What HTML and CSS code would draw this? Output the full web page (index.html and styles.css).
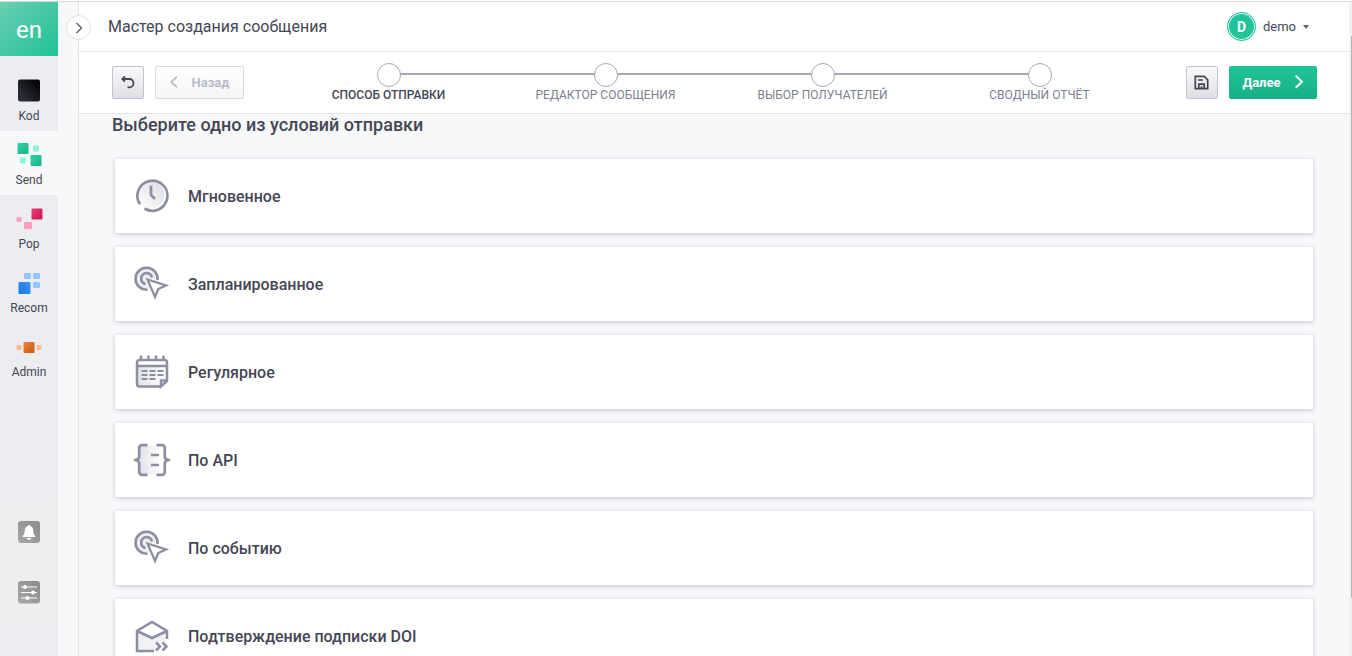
FILE: index.html
```html
<!DOCTYPE html>
<html lang="ru">

<head>
    <meta charset="UTF-8">
    <meta name="viewport" content="width=device-width, initial-scale=1.0">
    <title>Мастер создания сообщения</title>
    <link rel="stylesheet" href="styles.css">
</head>

<body>
    <aside class="sidebar">
        <a href="#" class="logo">en</a>
        <nav class="nav">
            <a href="#" class="nav-item">
                <svg width="29" height="24" viewBox="0 0 29 24">
                    <defs>
                        <linearGradient id="g-kod" x1="0" y1="1" x2="1" y2="0"><stop offset="0" stop-color="#343743"/><stop offset="1" stop-color="#000"/></linearGradient>
                        <linearGradient id="g-send" x1="0" y1="0" x2="1" y2="1"><stop offset="0" stop-color="#2fd6a8"/><stop offset="1" stop-color="#1bb288"/></linearGradient>
                        <linearGradient id="g-pop" x1="0" y1="0" x2="1" y2="1"><stop offset="0" stop-color="#ef3f7c"/><stop offset="1" stop-color="#c9134f"/></linearGradient>
                        <linearGradient id="g-recom" x1="1" y1="0" x2="0" y2="1"><stop offset="0" stop-color="#3f95f5"/><stop offset="1" stop-color="#1b76e0"/></linearGradient>
                        <linearGradient id="g-admin" x1="0" y1="0" x2="1" y2="1"><stop offset="0" stop-color="#ef8238"/><stop offset="1" stop-color="#c75a14"/></linearGradient>
                        <linearGradient id="g-gray" x1="0" y1="1" x2="1" y2="0"><stop offset="0" stop-color="#a6a6a6"/><stop offset="1" stop-color="#8c8c8c"/></linearGradient>
                    </defs>
                    <rect x="3" y="0.500" width="22" height="22" rx="2" fill="url(#g-kod)"/>
                </svg>
                <span>Kod</span>
            </a>
            <a href="#" class="nav-item active">
                <svg width="29" height="24" viewBox="0 0 29 24">
                    <rect x="2.500" y="0" width="11" height="11" rx="1" fill="url(#g-send)"/>
                    <rect x="15.500" y="12" width="11" height="11" rx="1" fill="url(#g-send)"/>
                    <rect x="18" y="2.500" width="6" height="6" rx="1" fill="#8ff5d8"/>
                    <rect x="5" y="14.500" width="6" height="6" rx="1" fill="#8ff5d8"/>
                </svg>
                <span>Send</span>
            </a>
            <a href="#" class="nav-item">
                <svg width="29" height="24" viewBox="0 0 29 24">
                    <rect x="16.500" y="1.500" width="11" height="11" rx="1" fill="url(#g-pop)"/>
                    <rect x="1.500" y="10" width="5" height="5" rx="1" fill="#fc9dbd"/>
                    <rect x="9" y="15" width="8" height="7" rx="1" fill="#fc9dbd"/>
                </svg>
                <span>Pop</span>
            </a>
            <a href="#" class="nav-item">
                <svg width="29" height="24" viewBox="0 0 29 24">
                    <rect x="3.500" y="11" width="12" height="12" rx="1" fill="url(#g-recom)"/>
                    <rect x="9" y="2" width="7" height="6" rx="1" fill="#98c7ff"/>
                    <rect x="18" y="2" width="7" height="6" rx="1" fill="#98c7ff"/>
                    <rect x="18" y="11" width="7" height="6" rx="1" fill="#98c7ff"/>
                </svg>
                <span>Recom</span>
            </a>
            <a href="#" class="nav-item">
                <svg width="29" height="24" viewBox="0 0 29 24">
                    <rect x="8.500" y="7" width="11" height="11" rx="1" fill="url(#g-admin)"/>
                    <rect x="1.500" y="10" width="5" height="5" rx="1" fill="#ffb98c"/>
                    <rect x="21.500" y="10" width="5" height="5" rx="1" fill="#ffb98c"/>
                </svg>
                <span>Admin</span>
            </a>
        </nav>
        <div class="tools">
            <button type="button" class="tool" aria-label="Уведомления">
                <svg width="23" height="23" viewBox="0 0 23 23">
                    <rect width="22" height="22" rx="3" fill="url(#g-gray)"/>
                    <path d="M11 4c.7 0 1 .5 1 1 2.300.5 3.300 2.400 3.300 4.500 0 3.500.7 4.200 2 5.200v1.300H4.700v-1.300c1.300-1 2-1.700 2-5.200 0-2.100 1-4 3.300-4.500 0-.5.3-1 1-1zM8.500 17h5c-.5 1.200-1.300 1.800-2.500 1.800s-2-.6-2.500-1.800z" fill="#fff"/>
                </svg>
            </button>
            <button type="button" class="tool" aria-label="Параметры">
                <svg width="23" height="23" viewBox="0 0 23 23">
                    <rect width="22" height="22.500" rx="3" fill="url(#g-gray)"/>
                    <path d="M3 6h16M3 11.500h16M3 17h16" stroke="#fff" stroke-width="1.200"/>
                    <g fill="#fff"><circle cx="7" cy="6" r="2"/><circle cx="15" cy="11.500" r="2"/><circle cx="9.500" cy="17" r="2"/></g>
                </svg>
            </button>
        </div>
    </aside>

    <div class="rail">
        <button type="button" class="expand" aria-label="Развернуть меню">
            <svg width="8" height="12" viewBox="0 0 8 12" fill="none" stroke="#5c5f6e" stroke-width="1.400"><path d="M1.500 1l5 5-5 5"/></svg>
        </button>
    </div>

    <main class="main">
        <header class="header">
            <h1>Мастер создания сообщения</h1>
            <button type="button" class="user">
                <span class="avatar">D</span>
                <span>demo</span>
                <span class="caret"></span>
            </button>
        </header>

        <div class="toolbar">
            <button type="button" class="btn btn-icon" aria-label="Отменить">
                <svg width="14" height="14" viewBox="0 0 14 14" fill="none" stroke="#454655" stroke-width="1.800"><path d="M4 .3L1.300 3l2.700 2.700M1.500 3h6.800a4.200 4.200 0 0 1 0 8.400H6.500"/></svg>
            </button>
            <button type="button" class="btn btn-back" disabled>
                <svg width="8" height="14" viewBox="0 0 8 14" fill="none" stroke="#b9bbcb" stroke-width="1.800"><path d="M7 .7L1.300 6 7 11.300"/></svg>
                Назад
            </button>
            <ol class="steps">
                <li class="step current">Способ отправки</li>
                <li class="step">Редактор сообщения</li>
                <li class="step">Выбор получателей</li>
                <li class="step">Сводный отчёт</li>
            </ol>
            <button type="button" class="btn btn-icon" aria-label="Сохранить">
                <svg width="16" height="16" viewBox="0 0 16 16" fill="none" stroke="#454655" stroke-width="1.700"><path d="M1.300 1.300h8.900l3.500 3.500v8.900H1.300zM4.800 13.700V9.200h5.400v4.500M4 5h5M7.500 11.200v2.500"/></svg>
            </button>
            <button type="button" class="btn btn-next">
                Далее
                <svg width="9" height="15" viewBox="0 0 9 15" fill="none" stroke="#fff" stroke-width="1.900"><path d="M.7 .8L7 6.800.7 12.800"/></svg>
            </button>
        </div>

        <section class="content">
            <h2>Выберите одно из условий отправки</h2>
            <div class="options">
                <button type="button" class="option">
                    <svg width="36" height="36" viewBox="0 0 36 36" fill="none" stroke="#8c8fa1" stroke-width="2.700">
                        <defs><linearGradient id="g-soft"><stop offset="0" stop-color="#e3e4ea"/><stop offset="1" stop-color="#fff"/></linearGradient>
                        <linearGradient id="g-clock" x1="1" y1="0" x2="0" y2="1"><stop offset="0" stop-color="#dcdde4"/><stop offset="1" stop-color="#fff"/></linearGradient></defs>
                        <circle cx="17" cy="17" r="13.500" fill="url(#g-clock)" stroke="none"/>
                        <path d="M6 26.200A15 15 0 1 1 10.500 30.500"/>
                        <path d="M17 7.500V17l4 4"/>
                    </svg>
                    <span>Мгновенное</span>
                </button>
                <button type="button" class="option">
                    <svg width="36" height="36" viewBox="0 0 36 36" fill="none" stroke="#8c8fa1" stroke-width="2.700">
                        <circle cx="12.700" cy="12.700" r="10" fill="#eeeff3" stroke="none"/>
                        <path d="M13.500 23.700A11 11 0 1 1 23.500 14M11.500 18A5.500 5.500 0 1 1 18 11.300"/>
                        <path d="M13.500 13.500l18.500 6-7.800 3.500-3.200 8z" fill="#fff" stroke-width="2.300"/>
                    </svg>
                    <span>Запланированное</span>
                </button>
                <button type="button" class="option">
                    <svg width="36" height="36" viewBox="0 0 36 36" fill="none" stroke="#8c8fa1" stroke-width="2.500">
                        <path d="M4 12h28v15l-5 5H4z" fill="url(#g-soft)" stroke="none"/>
                        <path d="M27 32.500H5.500A2.500 2.500 0 0 1 3 30V8.500A2.500 2.500 0 0 1 5.500 6h25A2.500 2.500 0 0 1 33 8.500V27l-6 5.500v-6h6M3 12h30"/>
                        <path d="M7 1.500V6M14.500 1.500V6M22 1.500V6M29.500 1.500V6"/>
                        <path d="M7.500 17h6M15.500 17h6M23.500 17h6M7.500 21h6M15.500 21h6M23.500 21h6M7.500 25h6M15.500 25h6" stroke-width="1.900"/>
                    </svg>
                    <span>Регулярное</span>
                </button>
                <button type="button" class="option">
                    <svg width="36" height="36" viewBox="0 0 36 36" fill="none" stroke="#8c8fa1" stroke-width="2.700">
                        <path d="M6 4h22v28H6z" fill="url(#g-soft)" stroke="none"/>
                        <path d="M13.500 3.200H8A2.800 2.800 0 0 0 5.200 6v8.500C5.200 17 3.500 18 0 18c3.500 0 5.200 1 5.200 3.500V30A2.800 2.800 0 0 0 8 32.800h5.500M22.500 3.200H28A2.800 2.800 0 0 1 30.800 6v8.500c0 2.500 1.700 3.500 5.200 3.500-3.500 0-5.200 1-5.200 3.500V30a2.800 2.800 0 0 1-2.800 2.800h-5.500"/>
                        <path d="M17 13h8M17 23h8"/>
                    </svg>
                    <span>По API</span>
                </button>
                <button type="button" class="option">
                    <svg width="36" height="36" viewBox="0 0 36 36" fill="none" stroke="#8c8fa1" stroke-width="2.700">
                        <circle cx="12.700" cy="12.700" r="10" fill="#eeeff3" stroke="none"/>
                        <path d="M13.500 23.700A11 11 0 1 1 23.500 14M11.500 18A5.500 5.500 0 1 1 18 11.300"/>
                        <path d="M13.500 13.500l18.500 6-7.800 3.500-3.200 8z" fill="#fff" stroke-width="2.300"/>
                    </svg>
                    <span>По событию</span>
                </button>
                <button type="button" class="option">
                    <svg width="36" height="36" viewBox="0 0 36 36" fill="none" stroke="#8c8fa1" stroke-width="2.500">
                        <path d="M4 14l14 6 14-6v12H20v7H4z" fill="#f1f2f5" stroke="none"/>
                        <path d="M20 33H3V13L18 4l15 9v8M3 13l15 7 15-7"/>
                        <path d="M22 24.500l4 4-4 4M28.500 24.500l4 4-4 4"/>
                    </svg>
                    <span>Подтверждение подписки DOI</span>
                </button>
            </div>
        </section>
    </main>

    <div class="scroll-track">
        <div class="scroll-thumb"></div>
    </div>
</body>

</html>
```
FILE: styles.css
```css
* {
    box-sizing: border-box;
    margin: 0;
    padding: 0;
}

html {
    background-color: #f7f8fa;
}

body {
    display: flex;
    height: 100vh;
    overflow: hidden;
    padding-top: 1px;
    border-top: 1px solid #fff;
    font-family: Roboto, sans-serif;
    font-size: 16px;
    color: #454655;
    background: #f7f8fa linear-gradient(#d8dadd, #d8dadd) top / 100% 1px no-repeat;
}

button {
    font-family: inherit;
    color: inherit;
    cursor: pointer;
}

svg {
    flex-shrink: 0;
}

/* Sidebar */
.sidebar {
    display: flex;
    flex-direction: column;
    flex-shrink: 0;
    width: 58px;
    padding-bottom: 34px;
    background-color: #ecedf1;
}

.logo {
    height: 54px;
    line-height: 56px;
    text-align: center;
    font-size: 24px;
    color: #fff;
    text-decoration: none;
    background: linear-gradient(135deg, #6bceb3, #1dc295);
}

.nav {
    display: flex;
    flex-direction: column;
    padding-top: 11px;
}

.nav-item {
    display: flex;
    flex-direction: column;
    align-items: center;
    gap: 6px;
    height: 64px;
    padding-top: 12px;
    font-size: 12px;
    line-height: 14px;
    color: #454655;
    text-decoration: none;
}

.nav-item.active {
    background-color: #f7f8fa;
}

.tools {
    margin-top: auto;
    background-color: #eee;
}

.tool {
    display: flex;
    align-items: center;
    justify-content: center;
    width: 100%;
    height: 60px;
    border: none;
    background: none;
}

/* Strip with the expand button */
.rail {
    position: relative;
    flex-shrink: 0;
    width: 21px;
    border-right: 1px solid #e2e4e8;
}

.expand {
    position: absolute;
    top: 13px;
    left: 8px;
    z-index: 1;
    display: flex;
    align-items: center;
    justify-content: center;
    width: 25px;
    height: 25px;
    border: 1px solid #dfe1e6;
    border-radius: 50%;
    background-color: #fff;
}

.main {
    display: flex;
    flex-direction: column;
    flex: 1;
    min-width: 0;
}

/* Header */
.header {
    display: flex;
    align-items: center;
    justify-content: space-between;
    flex-shrink: 0;
    height: 50px;
    padding: 0 40px 0 29px;
    border-bottom: 1px solid #e2e4e8;
    background-color: #fff;
}

h1 {
    font-size: 16px;
    font-weight: 400;
}

.user {
    display: flex;
    align-items: center;
    gap: 7px;
    border: none;
    background: none;
    font-size: 13px;
}

.avatar {
    width: 29px;
    height: 29px;
    border: 1px solid #1fc598;
    border-radius: 50%;
    box-shadow: inset 0 0 0 1px #fff;
    line-height: 28px;
    font-size: 14px;
    font-weight: 700;
    color: #fff;
    background-color: #1fc598;
}

.caret {
    border: 4px solid transparent;
    border-width: 4px 3px 0;
    border-top-color: #5c5f6e;
}

/* Toolbar */
.toolbar {
    display: flex;
    align-items: center;
    gap: 11px;
    flex-shrink: 0;
    height: 62px;
    padding: 0 32px 0 33px;
    border-bottom: 1px solid #e2e4e8;
    background-color: #fff;
}

.btn {
    display: flex;
    align-items: center;
    justify-content: center;
    height: 33px;
    border: 1px solid #c3c4d1;
    border-radius: 2px;
    font-size: 13px;
    font-weight: 700;
}

.btn-icon {
    width: 32px;
    background: linear-gradient(#fafafb, #dedfe5);
}

.btn-back {
    gap: 14px;
    width: 89px;
    border-color: #d9dae3;
    color: #b9bbcb;
    background: linear-gradient(#fff, #f5f5f6);
    cursor: default;
}

.btn-next {
    gap: 14px;
    width: 88px;
    border: none;
    color: #fff;
    background: linear-gradient(#1fc598, #18ae85);
}

.steps {
    display: flex;
    justify-content: center;
    flex: 1;
    padding-right: 2px;
    list-style: none;
}

.step {
    position: relative;
    display: flex;
    flex-direction: column;
    align-items: center;
    flex: 0 1 217px;
    padding-top: 1px;
    font-size: 12px;
    line-height: 16px;
    text-transform: uppercase;
    white-space: nowrap;
    color: #7c7f90;
}

.step::before {
    content: "";
    z-index: 1;
    width: 22px;
    height: 22px;
    border: 1px solid #a6a8ba;
    border-radius: 50%;
    background-color: #fff;
}

.step:not(:last-child)::after {
    content: "";
    position: absolute;
    top: 11px;
    left: 50%;
    width: 100%;
    height: 2px;
    background-color: #a6a8ba;
}

.step.current {
    font-weight: 500;
    color: #454655;
}

/* Content */
.content {
    flex: 1;
    min-height: 0;
    overflow: hidden;
    padding: 0 36px 0 33px;
}

h2 {
    font-size: 18px;
    font-weight: 500;
    line-height: 22px;
}

.options {
    display: flex;
    flex-direction: column;
    gap: 14px;
    padding: 23px 0 14px 3px;
}

.option {
    display: flex;
    align-items: center;
    gap: 18px;
    height: 74px;
    flex-shrink: 0;
    padding: 0 19px;
    border: none;
    border-radius: 2px;
    box-shadow: 0 1px 4px rgba(69, 70, 105, 0.3);
    font-size: 16px;
    font-weight: 500;
    background-color: #fff;
}

/* Scrollbar */
.scroll-track {
    flex-shrink: 0;
    width: 3px;
    padding: 34px 0 58px 2px;
    background-color: #f1f1f1;
}

.scroll-thumb {
    height: 100%;
    background-color: #b5b5b5;
}
```
